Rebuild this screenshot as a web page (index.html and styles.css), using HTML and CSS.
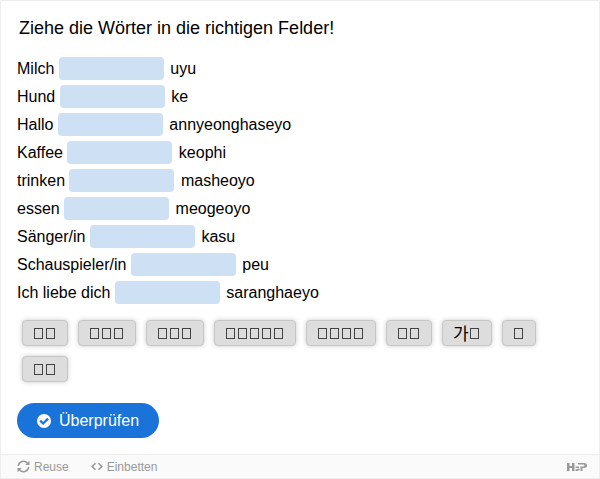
FILE: index.html
```html
<!DOCTYPE html>
<html lang="de">
<head>
<meta charset="utf-8">
<meta name="viewport" content="width=device-width, initial-scale=1">
<title>Ziehe die Wörter</title>
<link rel="stylesheet" href="styles.css">
</head>
<body>
<div class="frame">
  <main class="content">
    <h1 class="title">Ziehe die Wörter in die richtigen Felder!</h1>
    <div class="sentences">
      <p>Milch <span class="drop"></span> uyu</p>
      <p>Hund <span class="drop"></span> ke</p>
      <p>Hallo <span class="drop"></span> annyeonghaseyo</p>
      <p>Kaffee <span class="drop"></span> keophi</p>
      <p>trinken <span class="drop"></span> masheoyo</p>
      <p>essen <span class="drop"></span> meogeoyo</p>
      <p>Sänger/in <span class="drop"></span> kasu</p>
      <p>Schauspieler/in <span class="drop"></span> peu</p>
      <p>Ich liebe dich <span class="drop"></span> saranghaeyo</p>
    </div>
    <div class="words">
      <button class="word" type="button"><i class="box"></i><i class="box"></i></button>
      <button class="word" type="button"><i class="box"></i><i class="box"></i><i class="box"></i></button>
      <button class="word" type="button"><i class="box"></i><i class="box"></i><i class="box"></i></button>
      <button class="word" type="button"><i class="box"></i><i class="box"></i><i class="box"></i><i class="box"></i><i class="box"></i></button>
      <button class="word" type="button"><i class="box"></i><i class="box"></i><i class="box"></i><i class="box"></i></button>
      <button class="word" type="button"><i class="box"></i><i class="box"></i></button>
      <button class="word" type="button"><span class="syllable">가</span><i class="box"></i></button>
      <button class="word" type="button"><i class="box"></i></button>
      <button class="word" type="button"><i class="box"></i><i class="box"></i></button>
    </div>
    <button class="check" type="button">
      <svg class="check-icon" viewBox="0 0 14 14" aria-hidden="true"><circle cx="7" cy="7" r="7" fill="#fff"/><path d="M3.2 6.6 6.1 9.5 11 4.6" fill="none" stroke="#1a73d9" stroke-width="2.2"/></svg>
      Überprüfen
    </button>
  </main>
  <footer class="actions">
    <button class="action" type="button">
      <svg class="action-icon" viewBox="0 0 13 13" aria-hidden="true"><path d="M1.3 6A5.2 5.2 0 0 1 10.6 3.3M11.7 7A5.2 5.2 0 0 1 2.4 9.7" fill="none" stroke="#999" stroke-width="1.5"/><path d="M12.5 .8V5H8.3ZM.5 12.2V8H4.7Z" fill="#999"/></svg>
      Reuse
    </button>
    <button class="action" type="button">
      <svg class="action-icon code-icon" viewBox="0 0 12 13" aria-hidden="true"><path d="M4.5 3.3 1.2 6.5 4.5 9.7M7.5 3.3 10.8 6.5 7.500 9.700" fill="none" stroke="#999" stroke-width="1.6"/></svg>
      Einbetten
    </button>
    <a class="brand" href="#" aria-label="H5P">
      <svg class="brand-icon" viewBox="0 0 20 10" aria-hidden="true"><path d="M0 1H2.5V4H5V1H7.5V9H5V6H2.5V9H0ZM8.500 4.500H12V6H8.500ZM8.500 7.500 12 6.500 13 8 10 9H8.500ZM11 1H17Q20 1 20 3.500T17 6H15.500V9H13.500V4.500H17Q18 3.500 17 2.500H11Z" fill="#999"/></svg>
    </a>
  </footer>
</div>
</body>
</html>
```
FILE: styles.css
```css
* {
  box-sizing: border-box;
}

body {
  margin: 0;
  background: #fff;
  color: #000;
  font: 16px/28px "Liberation Sans", Arial, sans-serif;
}

button {
  font: inherit;
  cursor: pointer;
}

.frame {
  border: 1px solid #eee;
}

.content {
  padding: 13px 16px 16px;
}

.title {
  margin: 0 2px 13px;
  font-size: 18px;
  font-weight: 400;
  line-height: 28px;
}

.sentences p {
  margin: 0;
}

.drop {
  display: inline-block;
  width: 105px;
  height: 23px;
  margin: 0 2px 2px 0;
  border-radius: 4px;
  background: #cee0f4;
  vertical-align: middle;
}

.words {
  display: flex;
  flex-wrap: wrap;
  gap: 10px;
  padding: 13px 5px 0;
}

.word {
  display: flex;
  align-items: center;
  height: 26px;
  padding: 0 10px;
  border: 1px solid #c6c6c6;
  border-radius: 4px;
  background: #ddd;
  box-shadow: 0 0 5px rgba(0, 0, 0, 0.2);
  color: #000;
}

.box {
  width: 9px;
  height: 11px;
  margin: 0 2px 0 1px;
  border: 1px solid #444;
}

.syllable {
  font-family: "Noto Sans CJK KR", sans-serif;
  font-size: 17px;
  line-height: 24px;
}

.check {
  display: flex;
  align-items: center;
  gap: 8px;
  height: 35px;
  margin-top: 21px;
  padding: 0 20px;
  border: 0;
  border-radius: 18px;
  background: #1a73d9;
  color: #fff;
}

.check-icon {
  width: 14px;
  height: 14px;
}

.actions {
  display: flex;
  align-items: center;
  gap: 22px;
  height: 24px;
  padding: 0 12px 0 16px;
  border-top: 1px solid #eee;
  background: #fafafa;
}

.action {
  display: flex;
  align-items: center;
  gap: 4px;
  padding: 0;
  border: 0;
  background: none;
  color: #999;
  font-size: 12px;
  line-height: 22px;
}

.action-icon {
  width: 13px;
  height: 13px;
}

.code-icon {
  width: 12px;
}

.brand {
  display: flex;
  margin-left: auto;
}

.brand-icon {
  width: 20px;
  height: 10px;
}
```
